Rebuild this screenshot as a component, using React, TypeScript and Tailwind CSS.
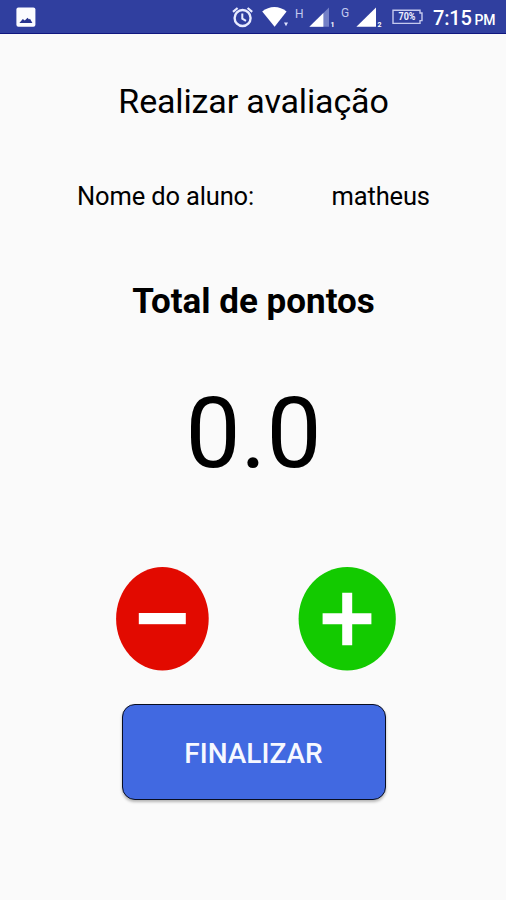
import React from 'react';

const PhotoIcon = () => (
  <svg width="20" height="20" viewBox="0 0 20 20" className="shrink-0">
    <rect x="0.4" y="0.6" width="19" height="19.2" rx="2" fill="#fbfcff" />
    <path d="M3.4 16 6.8 12 8.8 13.6 11.6 10.8 13 12.4 14 11.8 16.4 16Z" fill="#27348f" />
  </svg>
);

const AlarmIcon = () => (
  <svg width="22" height="22" viewBox="0 0 22 22" fill="none" stroke="#e8ebff" className="shrink-0">
    <circle cx="10.6" cy="12" r="8" strokeWidth="2.4" />
    <path d="M1 5.8 5.6 2M20.2 5.8 15.6 2" strokeWidth="2.2" />
    <path d="M10.3 7.5V12.6L14 14.8" strokeWidth="2" />
  </svg>
);

const WifiIcon = () => (
  <svg width="28" height="22" viewBox="0 0 28 22" className="shrink-0">
    <path d="M0.2 5.6C7.2 -0.4 17.6 -0.4 24.6 5.6L12.6 20.8Z" fill="#fff" />
    <path d="M22 16.6H26L24 20.2Z" fill="#dfe3ff" />
  </svg>
);

interface SignalProps {
  sim: string;
  full?: boolean;
}

const SignalIcon: React.FC<SignalProps> = ({ sim, full }) => (
  <svg width="28" height="22" viewBox="0 0 28 22" className="shrink-0">
    {full ? (
      <path d="M0.4 20.8 20 1.6V20.8Z" fill="#fff" />
    ) : (
      <>
        <path d="M0.4 20.8 20 1.6V20.8Z" fill="#7380c6" />
        <path d="M0.4 20.8 14.4 7V20.8Z" fill="#fff" />
      </>
    )}
    <text x="21.4" y="20.6" fill="#fff" fontSize="7" fontWeight="700" fontFamily="Roboto, sans-serif">
      {sim}
    </text>
  </svg>
);

const BatteryIcon = () => (
  <svg width="32" height="16" viewBox="0 0 32 16" className="shrink-0">
    <path d="M1 1.2H28V4H30V11.6H28V14.4H1Z" fill="none" stroke="#c5caee" strokeWidth="1.4" />
    <text x="15" y="11.4" fill="#eef0ff" fontSize="10" fontWeight="700" textAnchor="middle" textLength="17" lengthAdjust="spacingAndGlyphs" fontFamily="Roboto, sans-serif">
      70%
    </text>
  </svg>
);

const StatusBar = () => (
  <header className="flex h-[34px] items-start border-b border-[#10177f] bg-[#303f9f] pl-4 pr-[9px] text-white">
    <div className="mt-[7px]">
      <PhotoIcon />
    </div>
    <div className="ml-auto flex items-start">
      <div className="mt-[6px]">
        <AlarmIcon />
      </div>
      <div className="ml-[8px] mt-[6px]">
        <WifiIcon />
      </div>
      <span className="ml-[5px] mt-[8px] w-[9px] text-[12px] leading-[12px] text-[#c3c9ee]">H</span>
      <div className="ml-[5px] mt-[6px]">
        <SignalIcon sim="1" />
      </div>
      <span className="ml-[4px] mt-[7px] w-[9px] text-[12px] leading-[12px] text-[#c3c9ee]">G</span>
      <div className="ml-[6px] mt-[6px]">
        <SignalIcon sim="2" full />
      </div>
      <div className="ml-[8px] mt-[9px]">
        <BatteryIcon />
      </div>
      <div className="ml-[9px] mt-[7px] flex w-[64px] items-baseline whitespace-nowrap font-medium leading-[22px]">
        <span className="text-[20px] tracking-[-0.2px]">7:15</span>
        <span className="ml-[3px] text-[14px] tracking-[-0.2px]">PM</span>
      </div>
    </div>
  </header>
);

const App: React.FC = () => {
  const aluno = 'matheus';
  const pontos = '0.0';

  return (
    <div className="flex h-[900px] w-[506px] flex-col overflow-hidden bg-[#fafafa] font-['Roboto',sans-serif] text-black">
      <StatusBar />

      <main className="flex flex-col items-center">
        <h1 className="ml-[1px] mt-[47px] whitespace-nowrap text-[34px] leading-[40px] tracking-[-0.15px]">Realizar avaliação</h1>

        <div className="mt-[60px] flex w-full whitespace-nowrap pl-[77px] text-[25.5px] leading-[30px] tracking-[-0.15px]">
          <span className="w-[254.5px]">Nome do aluno:</span>
          <span>{aluno}</span>
        </div>

        <h2 className="ml-[1px] mt-[71px] whitespace-nowrap text-[35px] font-bold leading-[40px]">Total de pontos</h2>

        <p className="ml-[1px] mt-[54px] text-[98px] leading-[116px]">{pontos}</p>

        <div className="mt-[75px] flex w-full pl-[116px]">
          <button aria-label="Diminuir" className="h-[104px] w-[93px]">
            <svg width="93" height="104" viewBox="0 0 93 104">
              <ellipse cx="46.4" cy="51.7" rx="46.3" ry="51.7" fill="#e20a00" />
              <rect x="22.8" y="46" width="47" height="11.2" fill="#fff" />
            </svg>
          </button>
          <button aria-label="Aumentar" className="ml-[89px] h-[104px] w-[98px]">
            <svg width="98" height="104" viewBox="0 0 98 104">
              <ellipse cx="49.2" cy="51.7" rx="48.6" ry="51.7" fill="#13ca00" />
              <path d="M44.2 25.8H54.2V46.2H73.4V57.2H54.2V78.2H44.2V57.2H24.6V46.2H44.2Z" fill="#fff" />
            </svg>
          </button>
        </div>

        <button className="ml-[1px] mt-[33px] h-[96px] w-[264px] rounded-[13px] border-[1.5px] border-[#080d20] bg-[#4169e1] pt-[3px] text-[28px] font-medium text-[#f6f8ff] shadow-[0_2px_3px_rgba(0,0,0,0.28)]">
          FINALIZAR
        </button>
      </main>
    </div>
  );
};

export default App;
